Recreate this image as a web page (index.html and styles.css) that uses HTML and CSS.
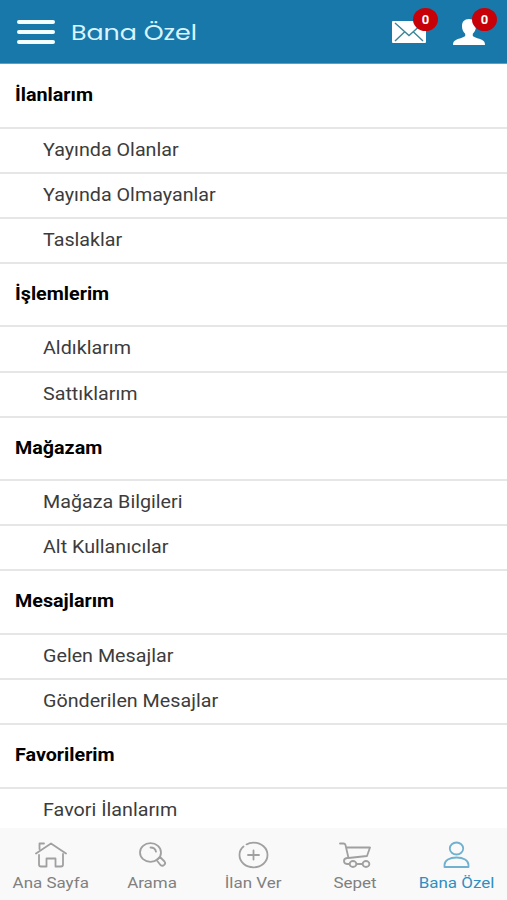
FILE: index.html
```
<!DOCTYPE html>
<html lang="tr">

<head>
  <meta charset="UTF-8">
  <meta name="viewport" content="width=device-width, initial-scale=1.0">
  <title>Bana Özel</title>
  <link rel="stylesheet" href="styles.css">
</head>

<body>
  <header>
    <button class="menu" aria-label="Menü"><i></i><i></i><i></i></button>
    <h1><span>Bana Özel</span></h1>
    <a class="action" href="#" aria-label="Mesajlar">
      <svg class="mail" width="34" height="22" viewBox="0 0 34 22">
        <rect width="34" height="22" rx="1" fill="#fff" />
        <path d="M3 2 17 14.500 31 2M3 20 12.500 11M31 20 21.500 11" fill="none" stroke="#3c8598" stroke-width="1.400" />
      </svg>
      <b>0</b>
    </a>
    <a class="action" href="#" aria-label="Hesabım">
      <svg class="user" width="32" height="27" viewBox="0 0 32 27">
        <path d="M16 0c4.800 0 7 3 7 7.300 0 3.200-1.200 5.700-3.200 7.400v2.300c1.500 1.500 6.200 2.400 8.900 3.800C31.200 22 32 23.500 32 26H0c0-2.500.8-4 3.300-5.200 2.700-1.400 7.400-2.300 8.900-3.800v-2.300C10.200 13 9 10.500 9 7.300 9 3 11.200 0 16 0z" fill="#fff" />
      </svg>
      <b>0</b>
    </a>
  </header>

  <main>
    <h2><span>İlanlarım</span></h2>
    <ul>
      <li><span>Yayında Olanlar</span></li>
      <li><span>Yayında Olmayanlar</span></li>
      <li><span>Taslaklar</span></li>
    </ul>
    <h2><span>İşlemlerim</span></h2>
    <ul>
      <li><span>Aldıklarım</span></li>
      <li><span>Sattıklarım</span></li>
    </ul>
    <h2><span>Mağazam</span></h2>
    <ul>
      <li><span>Mağaza Bilgileri</span></li>
      <li><span>Alt Kullanıcılar</span></li>
    </ul>
    <h2><span>Mesajlarım</span></h2>
    <ul>
      <li><span>Gelen Mesajlar</span></li>
      <li><span>Gönderilen Mesajlar</span></li>
    </ul>
    <h2><span>Favorilerim</span></h2>
    <ul>
      <li><span>Favori İlanlarım</span></li>
    </ul>
  </main>

  <nav>
    <a href="#">
      <svg width="32" height="28" viewBox="0 0 32 28">
        <path d="M1 12.500 16 2.500l15 10M4.500 8V2.500h4.500M4 14v9.500q0 2 2 2h5.500v-8h9v8H26q2 0 2-2V13" />
      </svg>
      <span>Ana Sayfa</span>
    </a>
    <a href="#">
      <svg width="32" height="28" viewBox="0 0 32 28">
        <ellipse cx="14.500" cy="11.500" rx="10.500" ry="9.300" />
        <path d="M14.500 6.500c3 0 5 1.700 5.500 4.200M20.500 19l3.500-3 4.500 4.500c2 2.200-1.500 5.700-4 3.500z" />
      </svg>
      <span>Arama</span>
    </a>
    <a href="#">
      <svg width="32" height="28" viewBox="0 0 32 28">
        <path d="M6.500 5.500C4 7.500 2.500 10.500 2.500 14c0 7 6 12.300 14 12.300s14-5.300 14-12.300-6-12.300-14-12.300c-2.800 0-5 .5-7 1.700M16.500 9.500v9M11 14h11" />
      </svg>
      <span>İlan Ver</span>
    </a>
    <a href="#">
      <svg width="32" height="28" viewBox="0 0 32 28">
        <path d="M1 2.500h3.500q1.500 0 2 1.500L9.500 17l18.500-2L31 6.500H7.500M9.500 17H8c-4 .5-4 5.500 0 6h2.500M17.500 23h6" />
        <ellipse cx="14" cy="23" rx="3.400" ry="3" />
        <ellipse cx="27" cy="23" rx="3.400" ry="3" />
      </svg>
      <span>Sepet</span>
    </a>
    <a href="#" class="active">
      <svg width="32" height="28" viewBox="0 0 32 28">
        <ellipse cx="16.500" cy="7.500" rx="6.700" ry="6" />
        <path d="M4.500 26v-2c0-4.500 5-7.500 12-7.500s12 3 12 7.500v2z" />
      </svg>
      <span>Bana Özel</span>
    </a>
  </nav>
</body>

</html>
```
FILE: styles.css
```
* {
  box-sizing: border-box;
}

body {
  margin: 0;
  height: 100vh;
  display: flex;
  flex-direction: column;
  overflow: hidden;
  font-family: Roboto, sans-serif;
  font-size: 18px;
  background: #fff;
  color: #3c3c3c;
}

h1,
h2,
ul {
  margin: 0;
  padding: 0;
  list-style: none;
}

a {
  color: inherit;
  text-decoration: none;
}

header {
  flex: none;
  display: flex;
  height: 64px;
  padding-left: 17px;
  background: #1878a9;
  border-bottom: 1px solid #5f9fc0;
}

.menu {
  display: flex;
  flex-direction: column;
  gap: 6px;
  width: 38px;
  margin-top: 20px;
  padding: 0;
  border: 0;
  background: none;
}

.menu i {
  width: 38px;
  height: 4px;
  border-radius: 2px;
  background: #f4ffff;
}

h1 {
  flex: 1;
  padding-left: 16px;
  font: 400 22px/65px Poppins, Lato, sans-serif;
  color: #d9f4ff;
}

h1 span,
h2 span,
li span {
  display: inline-block;
  transform: scaleX(1.095);
  transform-origin: left;
}

h1 span {
  transform: scaleX(1.15);
}

.action {
  position: relative;
  width: 61px;
}

.action svg {
  display: block;
}

.mail {
  margin-top: 21px;
}

.user {
  margin-top: 19px;
}

.action b {
  position: absolute;
  top: 8px;
  left: 21px;
  width: 25px;
  height: 23px;
  border-radius: 50%;
  background: #c80008;
  color: #fff;
  font-size: 13px;
  line-height: 23px;
  text-align: center;
}

.action:last-child {
  width: 54px;
}

.action:last-child b {
  left: 19px;
}

main {
  flex: 1;
  min-height: 0;
  overflow: hidden;
}

h2 {
  height: 63.6px;
  padding-left: 15px;
  font-size: 18px;
  font-weight: 700;
  line-height: 64px;
  color: #000;
}

h2:first-child {
  height: 62.6px;
  line-height: 62px;
}

li {
  height: 45.1px;
  padding-left: 43px;
  border-top: 2px solid #e6e6e6;
  line-height: 42px;
}

ul {
  border-bottom: 2px solid #e6e6e6;
  margin-bottom: -2px;
}

nav {
  flex: none;
  display: grid;
  grid-template-columns: repeat(5, 1fr);
  height: 72px;
  padding-top: 13px;
  background: #f9f9f9;
  color: #808080;
  font-size: 15px;
  text-align: center;
}

nav svg {
  display: block;
  margin: 0 auto;
  fill: none;
  stroke: #a0a0a0;
  stroke-width: 1.8;
  stroke-linecap: round;
  stroke-linejoin: round;
}

nav span {
  display: inline-block;
  line-height: 28px;
  transform: scaleX(1.13);
}

.active {
  color: #2f8fc0;
}

.active svg {
  stroke: #6fb1cf;
}
```
